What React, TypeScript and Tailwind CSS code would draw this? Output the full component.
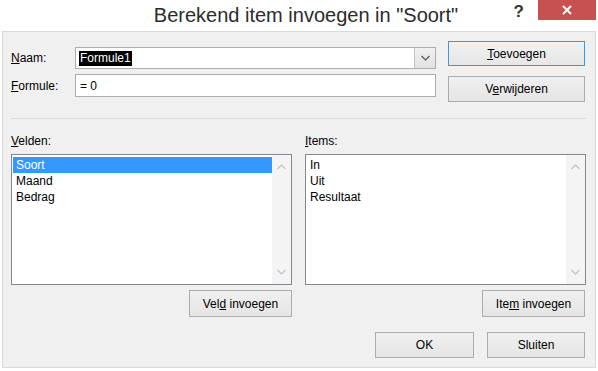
import React from "react";

const font = { fontFamily: '"Liberation Sans", Arial, sans-serif' };

// small chevron for scrollbars and the combo box
const Chevron = ({ up = false, className = "" }: { up?: boolean; className?: string }) => (
  <svg width="9" height="6" viewBox="0 0 9 6" className={className}>
    <path d={up ? "M0.5 5 L4.5 1 L8.5 5" : "M0.5 1 L4.5 5 L8.5 1"} fill="none" stroke="currentColor" strokeWidth="1.2" />
  </svg>
);

const Button = ({
  children,
  w,
  h = "h-[26px]",
  primary = false,
}: {
  children: React.ReactNode;
  w: string;
  h?: string;
  primary?: boolean;
}) => (
  <button
    className={`${w} ${h} flex items-center justify-center text-[12px] text-black border ${
      primary ? "border-[#3c9ae6] bg-gradient-to-b from-[#f2f2f2] to-[#e6e6e6]" : "border-[#acacac] bg-gradient-to-b from-[#f0f0f0] to-[#e5e5e5]"
    }`}
  >
    <span>{children}</span>
  </button>
);

const ListBox = ({ items, selected }: { items: string[]; selected?: number }) => (
  <div className="w-[281px] h-[131px] border border-[#828790] bg-white flex">
    <div className="flex-1 pt-[2px] pl-[1px]">
      {items.map((it, i) => (
        <div
          key={it}
          className={`h-[16px] leading-[16px] pl-[3px] text-[12px] ${i === selected ? "bg-[#3399ff] text-white" : "text-black"}`}
        >
          {it}
        </div>
      ))}
    </div>
    <div className="w-[19px] bg-[#f4f4f4] flex flex-col items-center justify-between py-[9px] text-[#c2c2c2]">
      <Chevron up />
      <Chevron />
    </div>
  </div>
);

export default function App() {
  return (
    <div className="w-[598px] h-[371px] bg-white overflow-hidden" style={font}>
      {/* title bar */}
      <div className="h-[31px] flex items-start">
        <div className="flex-1 pl-[112px] pt-[2px] text-center text-[20px] leading-[26px] text-[#2b2b2b]">
          Berekend item invoegen in "Soort"
        </div>
        <div className="w-[24px] pt-[2px] text-right text-[17px] leading-[20px] font-bold text-[#333]">?</div>
        <div className="w-[58px] h-[20px] mr-[2px] ml-[14px] bg-[#c75050] flex items-center justify-center">
          <svg width="10" height="10" viewBox="0 0 10 10">
            <path d="M1 1 L9 9 M9 1 L1 9" stroke="white" strokeWidth="2" />
          </svg>
        </div>
      </div>

      {/* body */}
      <div className="mx-[2px] h-[337px] border border-[#d9d9d9] bg-[#f0f0f0] pl-[8px] pr-[9px] text-[12px] text-black">
        <div className="flex items-start">
          <div className="mt-[15px] flex flex-col gap-[5px]">
            <div className="flex items-center">
              <span className="w-[64px]">
                <u>N</u>aam:
              </span>
              <div className="w-[361px] h-[22px] border border-[#abadb3] bg-white flex">
                <div className="flex-1 flex items-center pl-[3px]">
                  <span className="bg-black text-white leading-[15px] px-[1px]">Formule1</span>
                </div>
                <div className="w-[21px] border-l border-[#c4c4c4] bg-gradient-to-b from-[#f0f0f0] to-[#e2e2e2] flex items-center justify-center text-[#555]">
                  <Chevron />
                </div>
              </div>
            </div>
            <div className="flex items-center">
              <span className="w-[64px]">
                <u>F</u>ormule:
              </span>
              <div className="w-[361px] h-[23px] border border-[#abadb3] bg-white flex items-center pl-[4px]">= 0</div>
            </div>
          </div>
          <div className="ml-[12px] mt-[9px] flex flex-col gap-[10px]">
            <Button w="w-[137px]" h="h-[25px]" primary>
              <u>T</u>oevoegen
            </Button>
            <Button w="w-[137px]">
              V<u>e</u>rwijderen
            </Button>
          </div>
        </div>

        <div className="mt-[16px] h-px bg-[#dadada]" />

        <div className="mt-[15px] flex gap-[13px]">
          <div className="flex flex-col">
            <div className="leading-[15px] mb-[5px]">
              <u>V</u>elden:
            </div>
            <ListBox items={["Soort", "Maand", "Bedrag"]} selected={0} />
            <div className="mt-[5px] flex justify-end">
              <Button w="w-[103px]" h="h-[27px]">
                Vel<u>d</u> invoegen
              </Button>
            </div>
          </div>
          <div className="flex flex-col">
            <div className="leading-[15px] mb-[5px]">
              <u>I</u>tems:
            </div>
            <ListBox items={["In", "Uit", "Resultaat"]} />
            <div className="mt-[5px] flex justify-end pr-px">
              <Button w="w-[103px]" h="h-[27px]">
                Ite<u>m</u> invoegen
              </Button>
            </div>
          </div>
        </div>

        <div className="mt-[15px] flex justify-end gap-[13px] pr-px">
          <Button w="w-[99px]">OK</Button>
          <Button w="w-[98px]">Sluiten</Button>
        </div>
      </div>
    </div>
  );
}
